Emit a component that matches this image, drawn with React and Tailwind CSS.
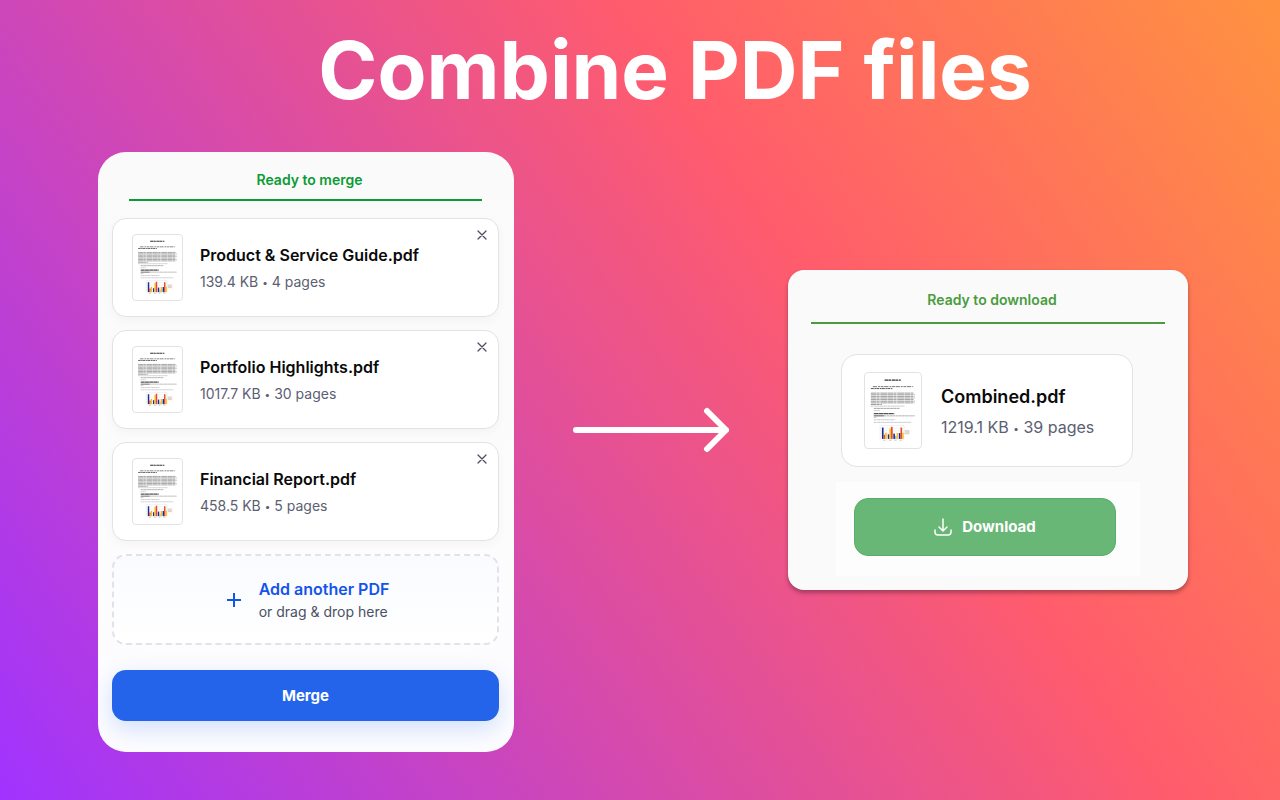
import React from "react";

const files = [
  { name: "Product & Service Guide.pdf", size: "139.4 KB", pages: 4 },
  { name: "Portfolio Highlights.pdf", size: "1017.7 KB", pages: 30 },
  { name: "Financial Report.pdf", size: "458.5 KB", pages: 5 },
];

const bars = [
  [52, 168, "#17328c"], [57, 190, "#e8482c"], [62, 184, "#fbbf24"],
  [70, 189, "#17328c"], [75, 171, "#fbbf24"], [80, 166, "#e8482c"],
  [87, 187, "#17328c"], [92, 194, "#93b4e8"], [97, 185, "#fbbf24"],
  [104, 185, "#17328c"], [109, 168, "#e8482c"], [114, 184, "#fbbf24"],
];

function Thumbnail({ className }) {
  return (
    <svg viewBox="0 0 172 231" preserveAspectRatio="none" className={className} aria-hidden="true">
      <g fill="none">
        <path d="M60 22H110" strokeDasharray="11 1 8 2" stroke="#333" strokeWidth="4" />
        <path d="M24 42H148" strokeDasharray="13 3 6 2 9 2" stroke="#777" strokeWidth="3" />
        <path d="M18 48H84" strokeDasharray="9 2 5 1" stroke="#555" strokeWidth="3" />
      </g>
      <g fill="none" stroke="#999" strokeWidth="3" strokeDasharray="17 1 9 2 22 1">
        <path d="M18 62H150M18 67H153M18 72H152M18 77H153M18 82H151M18 87H153M18 92H152" />
        <path d="M18 97H52" stroke="#999" />
      </g>
      <g fill="none" stroke="#aaa" strokeWidth="2">
        <path d="M18 102H122M27 116H45M27 137H36M27 144H93M27 152H142" strokeDasharray="7 1 4 1" />
        <path d="M27 109H107" stroke="#777" strokeDasharray="9 1" />
        <path d="M27 125H90" stroke="#555" strokeWidth="4" strokeDasharray="14 1" />
        <path d="M27 132H58" stroke="#555" strokeWidth="3" />
        <path d="M58 132H153" stroke="#888" strokeDasharray="8 1" />
      </g>
      <path d="M46 162H120V203H46ZM46 170H120M46 178H120M46 186H120M46 194H120" fill="none" stroke="#d4d4d4" strokeWidth="1" />
      {bars.map(([x, y, fill]) => (
        <rect key={x} x={x} y={y} width="5" height={203 - y} fill={fill} />
      ))}
      <path d="M56 207H63M74 207H81M90 207H97M106 207H113M122 178H136M122 182H138M122 187H136" stroke="#aaa" strokeWidth="2" />
    </svg>
  );
}

function Status({ children, className }) {
  return (
    <p className={`border-b-2 pl-2 text-center text-sm leading-5 font-semibold ${className}`}>{children}</p>
  );
}

function FileMeta({ size, pages }) {
  return (
    <>
      {size} <span className="align-[1px] text-[10px] leading-none">•</span> {pages} pages
    </>
  );
}

function FileRow({ file }) {
  return (
    <li className="relative flex items-center gap-[17px] rounded-[14px] border border-[#e2e3e8] bg-white py-[15px] pr-10 pl-[19px] shadow-[0_4px_10px_rgba(0,0,0,0.03)]">
      <Thumbnail className="h-[67px] w-[51px] shrink-0 rounded-[4px] border border-[#e2e3e8] bg-white" />
      <div className="pt-px">
        <h2 className="text-base leading-6 font-semibold text-[#0a0a0a]">{file.name}</h2>
        <p className="mt-[3px] text-sm leading-6 text-[#5b6072]">
          <FileMeta size={file.size} pages={file.pages} />
        </p>
      </div>
      <button type="button" aria-label={`Remove ${file.name}`} className="absolute top-[9px] right-[9px] p-px text-[#4b5065]">
        <svg viewBox="0 0 12 12" className="block size-3" fill="none" stroke="currentColor" strokeWidth="1.3" strokeLinecap="round">
          <path d="M2 2L10 10M10 2L2 10" />
        </svg>
      </button>
    </li>
  );
}

export default function App() {
  return (
    <div className="min-h-screen bg-[linear-gradient(55deg,#a033ff_0%,#ff5c6c_64%,#ff9340_100%)] pr-[92px] pb-12 pl-[98px] font-['Inter',sans-serif]">
      <h1 className="pt-[30px] pl-16 text-center text-[80px] leading-20 font-bold text-white">Combine PDF files</h1>

      <main className="mt-[42px] grid grid-cols-[416fr_274fr_400fr] items-center">
        <section className="rounded-[28px] bg-linear-to-b from-[#fafafa] to-[#fdfdff] pt-[18px] pr-[15px] pb-[31px] pl-3.5">
          <Status className="mx-[17px] border-[#0c9a35] pb-[9px] text-[#0c9a35]">Ready to merge</Status>
          <ul className="mt-[17px] flex flex-col gap-[13px]">
            {files.map((file) => (
              <FileRow key={file.name} file={file} />
            ))}
          </ul>
          <button type="button" className="mt-[13px] flex w-full items-center justify-center gap-[17px] rounded-[14px] border-2 border-dashed border-[#e2e3ea] bg-linear-to-b from-[#f9fbff] to-white py-[21px] pl-1 text-left">
            <svg viewBox="0 0 16 16" className="size-4" fill="none" stroke="#1554ea" strokeWidth="2">
              <path d="M1 8H15M8 1V15" />
            </svg>
            <span>
              <span className="block text-base leading-6 font-semibold text-[#1554ea]">Add another PDF</span>
              <span className="block text-sm leading-[21px] text-[#4b5162]">or drag &amp; drop here</span>
            </span>
          </button>
          <button type="button" className="mt-[25px] block w-full rounded-[14px] bg-[#2364eb] py-[13px] text-[15px] leading-[25px] font-bold text-white shadow-[0_8px_24px_rgba(37,99,235,0.2)]">
            Merge
          </button>
        </section>

        <div className="flex justify-center pb-11">
          <svg viewBox="0 0 156 46" className="w-[156px]" fill="none" stroke="white" strokeWidth="6" strokeLinecap="round" strokeLinejoin="round" aria-hidden="true">
            <path d="M3 23H153M134 4L153 23L134 42" />
          </svg>
        </div>

        <div className="pb-11">
          <section className="rounded-2xl bg-[#fafafa] px-[23px] pt-5 pb-3.5 shadow-[0_3px_4px_rgba(60,20,40,0.4)]">
            <Status className="border-[#4a9c3f] pb-3 text-[#4a9c3f]">Ready to download</Status>
            <article className="mt-[30px] mr-8 ml-[30px] flex items-center gap-[19px] rounded-2xl border border-[#e2e3e8] bg-white px-[22px] py-[17px]">
              <Thumbnail className="h-[77px] w-[58px] shrink-0 rounded-[4px] border border-[#e2e3e8] bg-white" />
              <div className="pt-0.5">
                <h2 className="text-lg leading-7 font-semibold text-[#0a0a0a]">Combined.pdf</h2>
                <p className="mt-0.5 text-base leading-7 text-[#5b6072]">
                  <FileMeta size="1219.1 KB" pages={39} />
                </p>
              </div>
            </article>
            <div className="mx-[25px] mt-[15px] bg-[#fdfdfd] pt-4 pr-6 pb-5 pl-[18px]">
              <button type="button" className="flex w-full items-center justify-center gap-2.5 rounded-[14px] border border-[#58ae66] bg-[#69b776] py-4 text-[15px] leading-6 font-bold text-white">
                <svg viewBox="0 0 18 18" className="size-[18px]" fill="none" stroke="currentColor" strokeWidth="1.5" strokeLinecap="round" strokeLinejoin="round">
                  <path d="M9 1V12.5M5 9L9 13L13 9M1 12V14Q1 17 4 17H14Q17 17 17 14V12" />
                </svg>
                Download
              </button>
            </div>
          </section>
        </div>
      </main>
    </div>
  );
}
